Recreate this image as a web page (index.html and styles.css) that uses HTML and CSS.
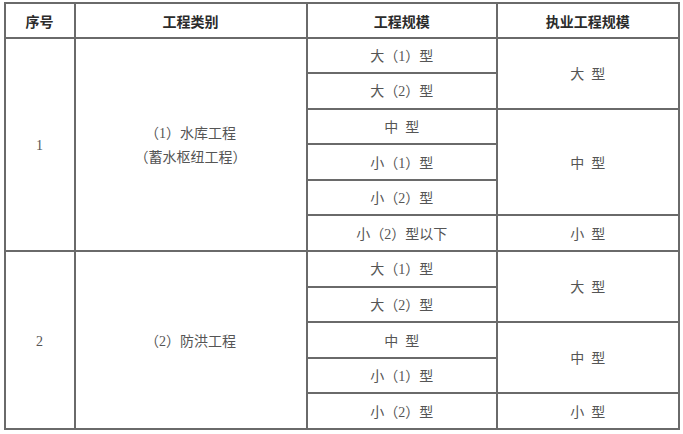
FILE: index.html
```html
<!DOCTYPE html>
<html lang="zh-CN">
<head>
<meta charset="utf-8">
<link rel="stylesheet" href="styles.css">
</head>
<body>
<table class="scale">
  <colgroup>
    <col class="c1"><col class="c2"><col class="c3"><col class="c4">
  </colgroup>
  <thead>
    <tr class="head">
      <th>序号</th><th>工程类别</th><th>工程规模</th><th>执业工程规模</th>
    </tr>
  </thead>
  <tbody>
    <tr>
      <td rowspan="6">1</td>
      <td rowspan="6" class="cat">（1）水库工程<br>（蓄水枢纽工程）</td>
      <td>大（1）型</td>
      <td rowspan="2">大&ensp;型</td>
    </tr>
    <tr><td>大（2）型</td></tr>
    <tr><td>中&ensp;型</td><td rowspan="3">中&ensp;型</td></tr>
    <tr><td>小（1）型</td></tr>
    <tr><td>小（2）型</td></tr>
    <tr><td>小（2）型以下</td><td>小&ensp;型</td></tr>
    <tr>
      <td rowspan="5">2</td>
      <td rowspan="5" class="cat">（2）防洪工程</td>
      <td>大（1）型</td>
      <td rowspan="2">大&ensp;型</td>
    </tr>
    <tr><td>大（2）型</td></tr>
    <tr><td>中&ensp;型</td><td rowspan="2">中&ensp;型</td></tr>
    <tr><td>小（1）型</td></tr>
    <tr><td>小（2）型</td><td>小&ensp;型</td></tr>
  </tbody>
</table>
</body>
</html>
```

FILE: styles.css
```css
html, body {
  margin: 0;
  padding: 0;
  background: #ffffff;
}

.scale {
  border-collapse: collapse;
  table-layout: fixed;
  width: 674px;
  margin: 2px 0 0 3.5px;
  font-size: 14px;
}

.c1 { width: 70px; }
.c2 { width: 232px; }
.c3 { width: 190.5px; }
.c4 { width: 181.5px; }

.scale th,
.scale td {
  border: 2px solid #6a6a6a;
  text-align: center;
  vertical-align: middle;
}

.scale th {
  height: 30.5px;
  padding: 2px 0 0;
  font-family: "Noto Sans CJK SC", sans-serif;
  font-weight: 600;
  color: #2b2b2b;
}

.scale td {
  height: 30.6px;
  padding: 3px 0 0;
  font-family: "Liberation Serif", "Noto Sans CJK SC", serif;
  font-weight: 400;
  color: #555555;
  line-height: 20px;
}

.scale td.cat {
  line-height: 24px;
}
```
